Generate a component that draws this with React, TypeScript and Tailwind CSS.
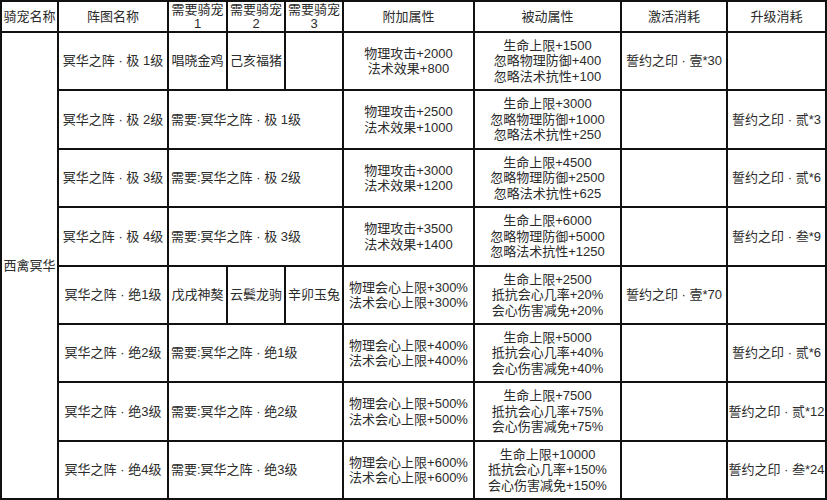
import React from 'react';

type Row = {
  name: string;
  pets: string[] | null;
  req?: string;
  add: string[];
  passive: string[];
  activate: string;
  upgrade: string;
};

const rows: Row[] = [
  {
    name: '冥华之阵 · 极 1级',
    pets: ['唱晓金鸡', '己亥福猪', ''],
    add: ['物理攻击+2000', '法术效果+800'],
    passive: ['生命上限+1500', '忽略物理防御+400', '忽略法术抗性+100'],
    activate: '誓约之印 · 壹*30',
    upgrade: '',
  },
  {
    name: '冥华之阵 · 极 2级',
    pets: null,
    req: '需要:冥华之阵 · 极 1级',
    add: ['物理攻击+2500', '法术效果+1000'],
    passive: ['生命上限+3000', '忽略物理防御+1000', '忽略法术抗性+250'],
    activate: '',
    upgrade: '誓约之印 · 贰*3',
  },
  {
    name: '冥华之阵 · 极 3级',
    pets: null,
    req: '需要:冥华之阵 · 极 2级',
    add: ['物理攻击+3000', '法术效果+1200'],
    passive: ['生命上限+4500', '忽略物理防御+2500', '忽略法术抗性+625'],
    activate: '',
    upgrade: '誓约之印 · 贰*6',
  },
  {
    name: '冥华之阵 · 极 4级',
    pets: null,
    req: '需要:冥华之阵 · 极 3级',
    add: ['物理攻击+3500', '法术效果+1400'],
    passive: ['生命上限+6000', '忽略物理防御+5000', '忽略法术抗性+1250'],
    activate: '',
    upgrade: '誓约之印 · 叁*9',
  },
  {
    name: '冥华之阵 · 绝1级',
    pets: ['戊戌神獒', '云鬓龙驹', '辛卯玉兔'],
    add: ['物理会心上限+300%', '法术会心上限+300%'],
    passive: ['生命上限+2500', '抵抗会心几率+20%', '会心伤害减免+20%'],
    activate: '誓约之印 · 壹*70',
    upgrade: '',
  },
  {
    name: '冥华之阵 · 绝2级',
    pets: null,
    req: '需要:冥华之阵 · 绝1级',
    add: ['物理会心上限+400%', '法术会心上限+400%'],
    passive: ['生命上限+5000', '抵抗会心几率+40%', '会心伤害减免+40%'],
    activate: '',
    upgrade: '誓约之印 · 贰*6',
  },
  {
    name: '冥华之阵 · 绝3级',
    pets: null,
    req: '需要:冥华之阵 · 绝2级',
    add: ['物理会心上限+500%', '法术会心上限+500%'],
    passive: ['生命上限+7500', '抵抗会心几率+75%', '会心伤害减免+75%'],
    activate: '',
    upgrade: '誓约之印 · 贰*12',
  },
  {
    name: '冥华之阵 · 绝4级',
    pets: null,
    req: '需要:冥华之阵 · 绝3级',
    add: ['物理会心上限+600%', '法术会心上限+600%'],
    passive: ['生命上限+10000', '抵抗会心几率+150%', '会心伤害减免+150%'],
    activate: '',
    upgrade: '誓约之印 · 叁*24',
  },
];

const Cell = ({ children, className = '' }: { children?: React.ReactNode; className?: string }) => (
  <div className={`bg-white flex flex-col items-center justify-center text-center whitespace-nowrap ${className}`}>
    {children}
  </div>
);

const Lines = ({ items }: { items: string[] }) => (
  <>
    {items.map((t, i) => (
      <span key={i}>{t}</span>
    ))}
  </>
);

export default function App() {
  return (
    <div
      className="w-[827px] h-[500px] bg-white text-[13px] leading-[15.5px] text-[#2b2b2b]"
      style={{ fontFamily: '"Liberation Sans", "Noto Sans CJK SC", sans-serif' }}
    >
      <div className="grid grid-cols-[55px_108px_57px_56px_56px_129px_145px_104px_97px] grid-rows-[29px_56px_57px_56px_57px_56px_56px_57px_56px] gap-[2px] p-[2px] bg-[#111] w-[827px] h-[500px]">
        {/* header */}
        <Cell>骑宠名称</Cell>
        <Cell>阵图名称</Cell>
        <Cell className="leading-[14px]">
          <span>需要骑宠</span>
          <span>1</span>
        </Cell>
        <Cell className="leading-[14px]">
          <span>需要骑宠</span>
          <span>2</span>
        </Cell>
        <Cell className="leading-[14px]">
          <span>需要骑宠</span>
          <span>3</span>
        </Cell>
        <Cell>附加属性</Cell>
        <Cell>被动属性</Cell>
        <Cell>激活消耗</Cell>
        <Cell>升级消耗</Cell>

        {/* merged pet name column */}
        <Cell className="row-span-8">西禽冥华</Cell>

        {rows.map((r, i) => (
          <React.Fragment key={i}>
            <Cell>{r.name}</Cell>
            {r.pets ? (
              r.pets.map((p, j) => <Cell key={j}>{p}</Cell>)
            ) : (
              <Cell className="col-span-3 !items-start pl-[2px]">{r.req}</Cell>
            )}
            <Cell>
              <Lines items={r.add} />
            </Cell>
            <Cell>
              <Lines items={r.passive} />
            </Cell>
            <Cell>{r.activate}</Cell>
            <Cell className="overflow-visible">{r.upgrade}</Cell>
          </React.Fragment>
        ))}
      </div>
    </div>
  );
}
